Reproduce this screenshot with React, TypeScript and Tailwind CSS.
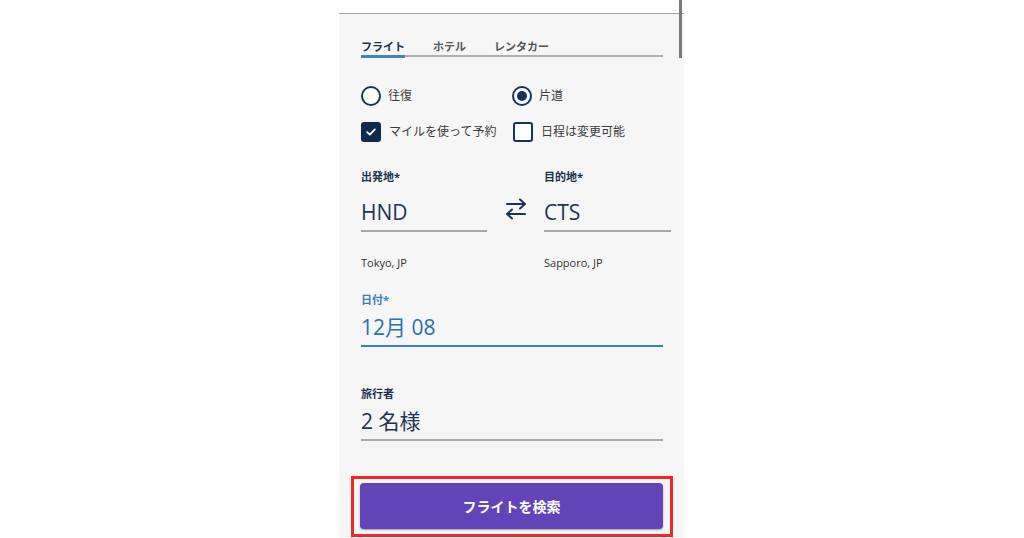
import React from "react";

const font = { fontFamily: '"Open Sans", "Noto Sans CJK JP", sans-serif' };

function SwapIcon() {
  return (
    <svg width="24" height="22" viewBox="0 0 24 22" fill="none" stroke="#1c3352" strokeWidth="2" strokeLinecap="round" strokeLinejoin="round">
      <path d="M3 6 H21 M16 1.5 L21 6 L16 10.5" />
      <path d="M21 16 H3 M8 11.5 L3 16 L8 20.5" />
    </svg>
  );
}

export default function App() {
  return (
    <div className="w-full h-[538px] bg-white relative overflow-hidden" style={font}>
      <div className="absolute left-[679px] top-0 w-[3px] h-[58px] bg-[#7a7a7a] z-10" />
      <div className="ml-[339px] mt-[13px] w-[345px] h-[525px] bg-[#f6f6f6] border-t border-[#a3a3a3] pl-[22px] pr-[21px]">
        {/* Tabs */}
        <div className="pt-[26px] flex gap-[28px] border-b-2 border-[#b0b0b0] pb-[1px] text-[11px] leading-[14px] font-bold text-[#555]">
          <div className="relative text-[#1c2f4c]">
            フライト
            <div className="absolute left-0 right-0 -bottom-[4px] h-[3px] bg-[#3d85c6]" />
          </div>
          <div>ホテル</div>
          <div>レンタカー</div>
        </div>

        {/* Radios */}
        <div className="mt-[29px] grid grid-cols-[151px_1fr] text-[12px] text-[#3c3c3c]">
          <div className="flex items-center h-[20px]">
            <div className="w-[20px] h-[20px] rounded-full border-2 border-[#17345a] bg-white" />
            <span className="ml-[7px]">往復</span>
          </div>
          <div className="flex items-center h-[20px]">
            <div className="w-[20px] h-[20px] rounded-full border-2 border-[#17345a] bg-white flex items-center justify-center">
              <div className="w-[10px] h-[10px] rounded-full bg-[#17345a]" />
            </div>
            <span className="ml-[7px]">片道</span>
          </div>
        </div>

        {/* Checkboxes */}
        <div className="mt-[16px] grid grid-cols-[152px_1fr] text-[12px] text-[#3c3c3c]">
          <div className="flex items-center h-[20px]">
            <div className="w-[20px] h-[20px] rounded-[3px] bg-[#0e2b4f] flex items-center justify-center">
              <svg width="10" height="8" viewBox="0 0 10 8" fill="none" stroke="white" strokeWidth="1.8" strokeLinecap="round" strokeLinejoin="round">
                <path d="M1.2 4.2 L3.8 6.6 L8.8 1.4" />
              </svg>
            </div>
            <span className="ml-[8px]">マイルを使って予約</span>
          </div>
          <div className="flex items-center h-[20px]">
            <div className="w-[20px] h-[20px] rounded-[3px] border-2 border-[#17345a] bg-white" />
            <span className="ml-[8px]">日程は変更可能</span>
          </div>
        </div>

        {/* Origin / Destination */}
        <div className="mt-[28px] flex">
          <div className="w-[126px] shrink-0">
            <div className="text-[11px] leading-[14px] font-bold text-[#1c2f4c]">出発地*</div>
            <div className="mt-[14px] text-[21px] leading-[28px] text-[#1f3454] pb-[4px] border-b-2 border-[#a9a9a9]">HND</div>
            <div className="mt-[24px] text-[11px] leading-[14px] text-[#333]">Tokyo, JP</div>
          </div>
          <div className="w-[57px] shrink-0 flex justify-center pt-[28px]">
            <SwapIcon />
          </div>
          <div className="w-[127px] shrink-0">
            <div className="text-[11px] leading-[14px] font-bold text-[#1c2f4c]">目的地*</div>
            <div className="mt-[14px] text-[21px] leading-[28px] text-[#1f3454] pb-[4px] border-b-2 border-[#a9a9a9]">CTS</div>
            <div className="mt-[24px] text-[11px] leading-[14px] text-[#333]">Sapporo, JP</div>
          </div>
        </div>

        {/* Date */}
        <div className="mt-[23px]">
          <div className="text-[11px] leading-[14px] font-bold text-[#3b7fc0]">日付*</div>
          <div className="mt-[6px] text-[21px] leading-[28px] text-[#2a6fb0] pb-[4px] border-b-2 border-[#3b7fc0]">12月 08</div>
        </div>

        {/* Travelers */}
        <div className="mt-[40px]">
          <div className="text-[11px] leading-[14px] font-bold text-[#1c2f4c]">旅行者</div>
          <div className="mt-[6px] text-[21px] leading-[28px] text-[#1f3454] pb-[4px] border-b-2 border-[#a9a9a9]">2 名様</div>
        </div>

        {/* Button */}
        <div className="mt-[35px] -ml-[10px] -mr-[10px] border-[3px] border-[#f02828] pl-[6px] pr-[7px] pt-[4px] pb-[5px]">
          <button className="w-full h-[46px] rounded-[4px] bg-[#6244b8] text-white text-[14px] font-bold shadow-[0_1px_2px_rgba(0,0,0,0.35)]" style={font}>
            フライトを検索
          </button>
        </div>
      </div>
    </div>
  );
}
